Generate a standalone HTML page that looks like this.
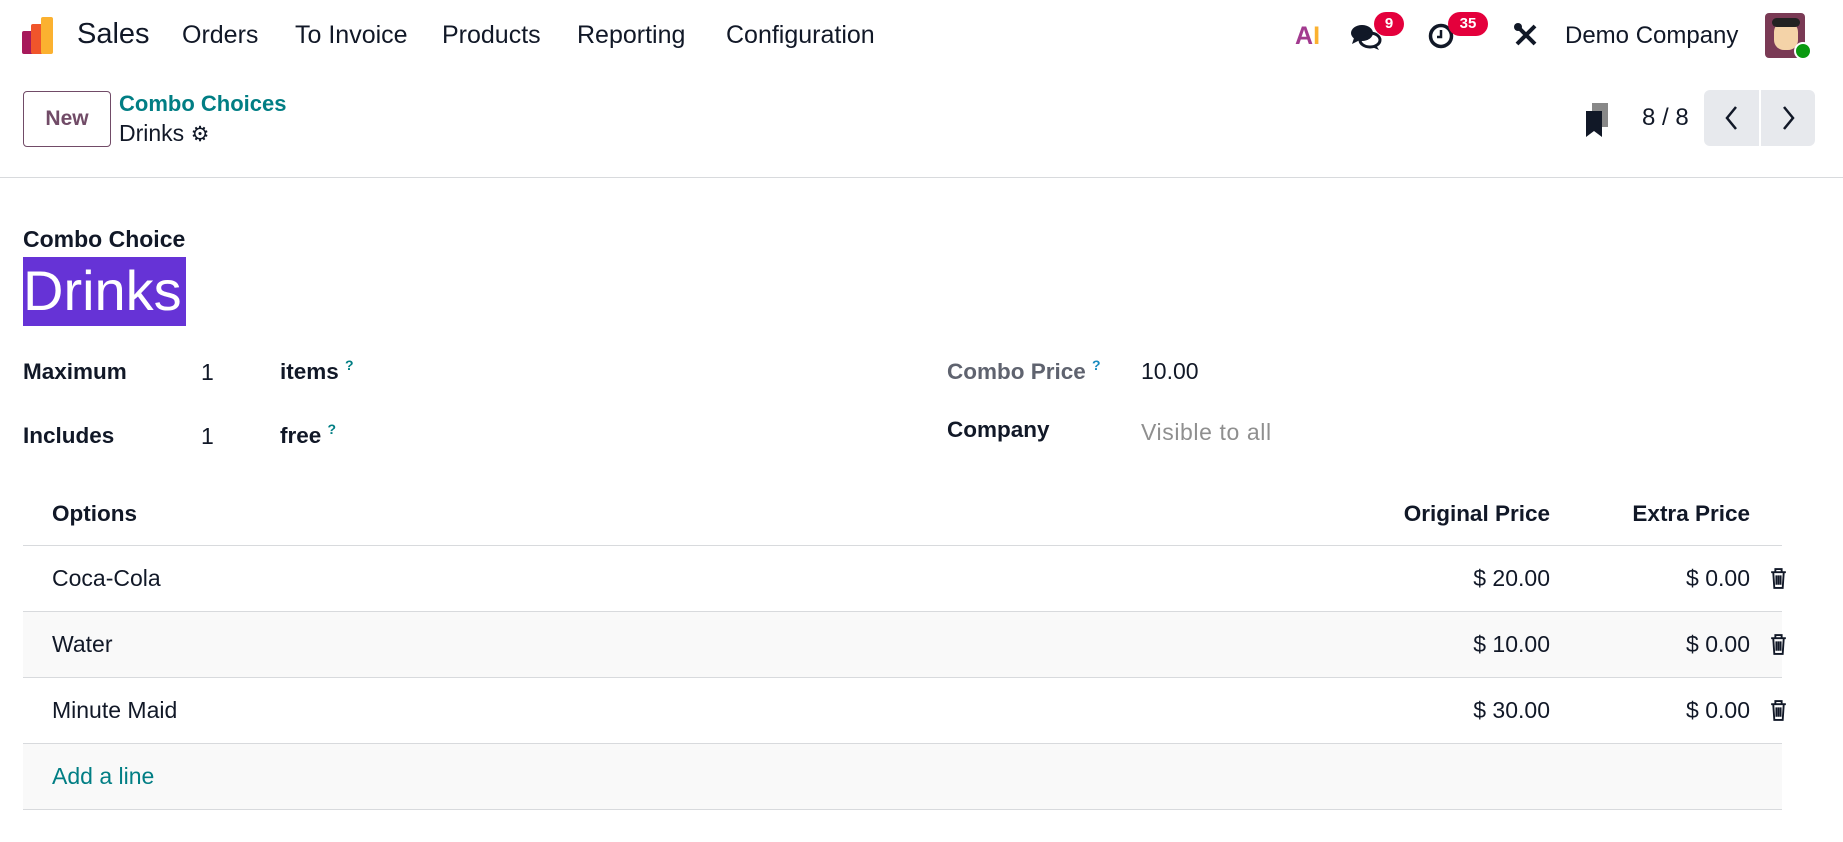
<!DOCTYPE html>
<html><head><meta charset="utf-8"><style>
*{margin:0;padding:0;box-sizing:border-box}
body{width:1843px;height:842px;background:#fff;font-family:"Liberation Sans",sans-serif;color:#111827;position:relative;overflow:hidden;font-size:23px}
.a{position:absolute;white-space:nowrap;line-height:26px}
.nav{font-size:25px;line-height:30px;top:20px}
.b{font-weight:bold;font-size:22.5px}
.hr{position:absolute;left:23px;width:1759px;height:1px;background:#d8dadd}
.badge{position:absolute;background:#e4003c;color:#fff;font-weight:bold;font-size:15px;line-height:24px;height:24px;border-radius:12px;text-align:center}
.q{font-size:14px;color:#1a8bbf;position:relative;top:-9px;font-weight:bold}
.trash{position:absolute;width:17px;height:21px}
</style></head><body>
<div style="position:absolute;left:22px;top:31px;width:12px;height:23px;background:#a7195b;border-radius:2px"></div>
<div style="position:absolute;left:31px;top:24px;width:12px;height:30px;background:#f0552b;border-radius:2px"></div>
<div style="position:absolute;left:41px;top:17px;width:12px;height:37px;background:#fbb130;border-radius:2px"></div>
<div class="a nav" style="left:77px;font-size:29px;top:19px">Sales</div>
<div class="a nav" style="left:182px">Orders</div>
<div class="a nav" style="left:295px">To Invoice</div>
<div class="a nav" style="left:442px">Products</div>
<div class="a nav" style="left:577px">Reporting</div>
<div class="a nav" style="left:726px">Configuration</div>
<div class="a" style="left:1295px;top:22px;font-size:25px;line-height:28px;font-weight:bold"><span style="color:#a23a8f">A</span><span style="color:#fbb130">I</span></div>
<svg style="position:absolute;left:1350px;top:22px" width="32" height="30" viewBox="0 0 32 30"><ellipse cx="12" cy="11" rx="11" ry="8" fill="#111827"/><path d="M4 16 L2 22 L10 18Z" fill="#111827"/><ellipse cx="20" cy="18" rx="10" ry="7" fill="none" stroke="#111827" stroke-width="3"/><path d="M26 23 L29 28 L22 25Z" fill="#111827"/></svg>
<div class="badge" style="left:1374px;top:12px;width:30px">9</div>
<svg style="position:absolute;left:1428px;top:22px" width="28" height="28" viewBox="0 0 28 28"><circle cx="13" cy="14" r="10.5" fill="none" stroke="#111827" stroke-width="3.5"/><path d="M13 8v7h-4" fill="none" stroke="#111827" stroke-width="2.5"/></svg>
<div class="badge" style="left:1448px;top:12px;width:40px">35</div>
<svg style="position:absolute;left:1513px;top:22px" width="26" height="26" viewBox="0 0 26 26"><path d="M4 22 L22 4 M4 4 L22 22" stroke="#111827" stroke-width="4"/><circle cx="5" cy="5" r="4" fill="#111827"/></svg>
<div class="a" style="left:1565px;top:22px;font-size:24px;line-height:28px">Demo Company</div>
<div style="position:absolute;left:1765px;top:13px;width:40px;height:45px;background:#7a3a55;border-radius:4px"></div>
<div style="position:absolute;left:1774px;top:22px;width:24px;height:28px;background:#f4d3a8;border-radius:10px"></div>
<div style="position:absolute;left:1772px;top:18px;width:28px;height:9px;background:#222;border-radius:5px"></div>
<div style="position:absolute;left:1794px;top:42px;width:18px;height:18px;background:#0a9a10;border-radius:50%;border:2px solid #fff"></div>
<div style="position:absolute;left:23px;top:91px;width:88px;height:56px;border:1px solid #714b67;border-radius:4px;color:#714b67;font-weight:bold;font-size:21px;line-height:54px;text-align:center">New</div>
<div class="a b" style="left:119px;top:91px;color:#017e84;font-size:22px">Combo Choices</div>
<div class="a" style="left:119px;top:120px;font-size:23px">Drinks <span style="font-size:21px">⚙</span></div>
<svg style="position:absolute;left:1586px;top:103px" width="24" height="34" viewBox="0 0 24 34"><rect x="6" y="0" width="16" height="24" fill="#888"/><path d="M0 8h16v26l-8-6-8 6z" fill="#111827"/></svg>
<div class="a" style="left:1642px;top:105px;font-size:24px">8 / 8</div>
<div style="position:absolute;left:1704px;top:90px;width:55px;height:56px;background:#e7e9ed;border-radius:6px 0 0 6px"></div>
<div style="position:absolute;left:1761px;top:90px;width:54px;height:56px;background:#e7e9ed;border-radius:0 6px 6px 0"></div>
<svg style="position:absolute;left:1720px;top:104px" width="24" height="28"><path d="M16 3 L7 14 L16 25" fill="none" stroke="#111827" stroke-width="2.5"/></svg>
<svg style="position:absolute;left:1776px;top:104px" width="24" height="28"><path d="M8 3 L17 14 L8 25" fill="none" stroke="#111827" stroke-width="2.5"/></svg>
<div style="position:absolute;left:0;top:177px;width:1843px;height:1px;background:#d8dadd"></div>
<div class="a b" style="left:23px;top:226px;font-size:23px">Combo Choice</div>
<div style="position:absolute;left:23px;top:257px;width:163px;height:69px;background:#6633d6"></div>
<div class="a" style="left:23px;top:261px;font-size:56px;line-height:60px;color:#fff">Drinks</div>
<div class="a b" style="left:23px;top:359px">Maximum</div>
<div class="a" style="left:201px;top:359px">1</div>
<div class="a b" style="left:280px;top:359px">items <span class="q" style="color:#017e84">?</span></div>
<div class="a b" style="left:23px;top:423px">Includes</div>
<div class="a" style="left:201px;top:423px">1</div>
<div class="a b" style="left:280px;top:423px">free <span class="q" style="color:#017e84">?</span></div>
<div class="a b" style="left:947px;top:359px;color:#5f636f">Combo Price <span class="q">?</span></div>
<div class="a" style="left:1141px;top:358px">10.00</div>
<div class="a b" style="left:947px;top:417px">Company</div>
<div class="a" style="left:1141px;top:419px;color:#8f8f8f;letter-spacing:0.6px">Visible to all</div>
<div style="position:absolute;left:23px;top:611px;width:1759px;height:66px;background:#f9f9f9"></div>
<div style="position:absolute;left:23px;top:743px;width:1759px;height:66px;background:#f9f9f9"></div>
<div class="hr" style="top:545px"></div>
<div class="hr" style="top:611px"></div>
<div class="hr" style="top:677px"></div>
<div class="hr" style="top:743px"></div>
<div class="hr" style="top:809px"></div>
<div class="a b" style="left:52px;top:501px">Options</div>
<div class="a b" style="right:293px;top:501px">Original Price</div>
<div class="a b" style="right:93px;top:501px">Extra Price</div>
<div class="a" style="left:52px;top:565px">Coca-Cola</div>
<div class="a" style="right:293px;top:565px">$ 20.00</div>
<div class="a" style="right:93px;top:565px">$ 0.00</div>
<div class="a" style="left:52px;top:631px">Water</div>
<div class="a" style="right:293px;top:631px">$ 10.00</div>
<div class="a" style="right:93px;top:631px">$ 0.00</div>
<div class="a" style="left:52px;top:697px">Minute Maid</div>
<div class="a" style="right:293px;top:697px">$ 30.00</div>
<div class="a" style="right:93px;top:697px">$ 0.00</div>
<div class="a" style="left:52px;top:763px;color:#017e84">Add a line</div>
<svg class="trash" style="left:1770px;top:568px" viewBox="0 0 16 20"><path d="M1 4h14M5 4V1h6v3M3 4l1 15h8l1-15M6 7v9M8 7v9M10 7v9" fill="none" stroke="#111827" stroke-width="1.8"/></svg>
<svg class="trash" style="left:1770px;top:634px" viewBox="0 0 16 20"><path d="M1 4h14M5 4V1h6v3M3 4l1 15h8l1-15M6 7v9M8 7v9M10 7v9" fill="none" stroke="#111827" stroke-width="1.8"/></svg>
<svg class="trash" style="left:1770px;top:700px" viewBox="0 0 16 20"><path d="M1 4h14M5 4V1h6v3M3 4l1 15h8l1-15M6 7v9M8 7v9M10 7v9" fill="none" stroke="#111827" stroke-width="1.8"/></svg>
</body></html>
